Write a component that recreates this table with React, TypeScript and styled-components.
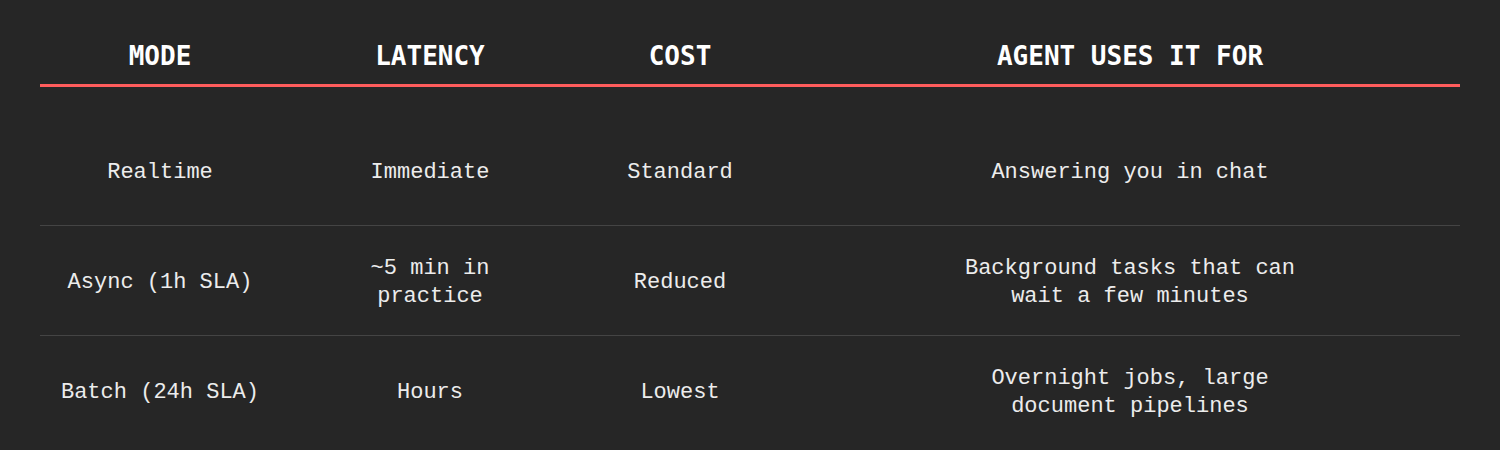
import React from "react";
import styled, { createGlobalStyle } from "styled-components";

const GlobalStyle = createGlobalStyle`
  html, body {
    margin: 0;
    padding: 0;
    background: #262626;
  }
`;

const Page = styled.div`
  width: 1500px;
  height: 450px;
  background: #262626;
  padding: 0 40px;
  box-sizing: border-box;
  overflow: hidden;
`;

const Grid = styled.div`
  display: grid;
  grid-template-columns: 240px 300px 200px 1fr;
  box-sizing: border-box;
`;

const HeaderRow = styled(Grid)`
  height: 87px;
  padding-top: 28px;
  border-bottom: 3px solid #ff5c5c;
  align-items: center;
`;

const HeadCell = styled.div<{ $shift?: number }>`
  text-align: center;
  padding-left: ${(p) => p.$shift ?? 0}px;
  font-family: "DejaVu Sans Mono", "Liberation Mono", monospace;
  font-weight: 700;
  font-size: 26px;
  line-height: 30px;
  color: #ffffff;
`;

const Body = styled.div`
  padding-top: 29px;
`;

const Row = styled(Grid)<{ $last?: boolean }>`
  height: 110px;
  align-items: center;
  border-bottom: ${(p) => (p.$last ? "none" : "1px solid #444444")};
`;

const Cell = styled.div<{ $shift?: number }>`
  display: flex;
  justify-content: center;
  padding-top: 4px;
  padding-left: ${(p) => p.$shift ?? 0}px;
`;

const CellText = styled.span<{ $max?: number }>`
  display: block;
  max-width: ${(p) => (p.$max ? `${p.$max}px` : "none")};
  text-align: center;
  font-family: "Liberation Mono", "DejaVu Sans Mono", monospace;
  font-size: 22px;
  line-height: 28px;
  color: #ececec;
`;

const columns = [
  { title: "MODE", shift: 0, max: 0 },
  { title: "LATENCY", shift: 0, max: 220 },
  { title: "COST", shift: 0, max: 0 },
  { title: "AGENT USES IT FOR", shift: 20, max: 360 },
];

const rows = [
  ["Realtime", "Immediate", "Standard", "Answering you in chat"],
  [
    "Async (1h SLA)",
    "~5 min in practice",
    "Reduced",
    "Background tasks that can wait a few minutes",
  ],
  [
    "Batch (24h SLA)",
    "Hours",
    "Lowest",
    "Overnight jobs, large document pipelines",
  ],
];

const App = () => {
  return (
    <>
      <GlobalStyle />
      <Page>
        <HeaderRow>
          {columns.map((c) => (
            <HeadCell key={c.title} $shift={c.shift}>
              {c.title}
            </HeadCell>
          ))}
        </HeaderRow>
        <Body>
          {rows.map((r, i) => (
            <Row key={r[0]} $last={i === rows.length - 1}>
              {r.map((text, j) => (
                <Cell key={j} $shift={columns[j].shift}>
                  <CellText $max={columns[j].max}>{text}</CellText>
                </Cell>
              ))}
            </Row>
          ))}
        </Body>
      </Page>
    </>
  );
};

export default App;
